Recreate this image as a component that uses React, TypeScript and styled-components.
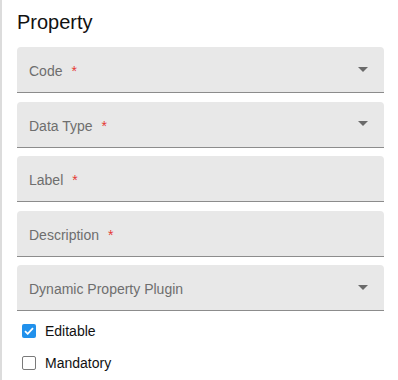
import React from "react";
import styled, { createGlobalStyle } from "styled-components";

const Global = createGlobalStyle`
  html, body { margin: 0; padding: 0; background: #fff; }
  body { font-family: "Liberation Sans", Arial, sans-serif; }
  * { box-sizing: border-box; }
`;

const Panel = styled.div`
  min-height: 380px;
  border-left: 2px solid #dcdcdc;
  padding: 10px 14px 0 15px;
  display: flex;
  flex-direction: column;
`;

const Title = styled.h2`
  margin: 0 0 13px 0;
  font-size: 20px;
  line-height: 24px;
  font-weight: 400;
  color: #111;
`;

const Fields = styled.div`
  display: flex;
  flex-direction: column;
  gap: 8.5px;
`;

const Field = styled.div`
  height: 46px;
  background: #e8e8e8;
  border-radius: 4px 4px 0 0;
  border-bottom: 1px solid #8c8c8c;
  display: flex;
  align-items: center;
  justify-content: space-between;
  padding: 3px 16px 0 12px;
`;

const Label = styled.span`
  font-size: 14px;
  color: #6e6e6e;
  line-height: 16px;
`;

const Star = styled.span`
  color: #e53935;
  margin-left: 9px;
`;

const Arrow = styled.svg`
  width: 10px;
  height: 5px;
  margin-top: -4px;
  fill: #6a6a6a;
`;

const Checks = styled.div`
  margin-top: 4px;
  display: flex;
  flex-direction: column;
`;

const CheckRow = styled.label`
  height: 32px;
  display: flex;
  align-items: center;
  padding-left: 5px;
  gap: 9px;
  font-size: 14px;
  color: #111;
`;

const Box = styled.span<{ $checked: boolean }>`
  width: 14px;
  height: 14px;
  border-radius: 2px;
  display: flex;
  align-items: center;
  justify-content: center;
  background: ${(p) => (p.$checked ? "#2191ec" : "#fff")};
  border: ${(p) => (p.$checked ? "none" : "1.5px solid #7a7a7a")};
`;

const fields = [
  { label: "Code", required: true, select: true },
  { label: "Data Type", required: true, select: true },
  { label: "Label", required: true, select: false },
  { label: "Description", required: true, select: false },
  { label: "Dynamic Property Plugin", required: false, select: true },
];

const Check = ({ checked, label }: { checked: boolean; label: string }) => (
  <CheckRow>
    <Box $checked={checked}>
      {checked && (
        <svg width="10" height="8" viewBox="0 0 10 8">
          <path d="M1 4.2 L3.7 6.8 L9 1.2" stroke="#fff" strokeWidth="1.8" fill="none" />
        </svg>
      )}
    </Box>
    {label}
  </CheckRow>
);

export default function App() {
  return (
    <>
      <Global />
      <Panel>
        <Title>Property</Title>
        <Fields>
          {fields.map((f) => (
            <Field key={f.label}>
              <Label>
                {f.label}
                {f.required && <Star>*</Star>}
              </Label>
              {f.select && (
                <Arrow viewBox="0 0 10 5">
                  <path d="M0 0 L5 5 L10 0 Z" />
                </Arrow>
              )}
            </Field>
          ))}
        </Fields>
        <Checks>
          <Check checked label="Editable" />
          <Check checked={false} label="Mandatory" />
        </Checks>
      </Panel>
    </>
  );
}
